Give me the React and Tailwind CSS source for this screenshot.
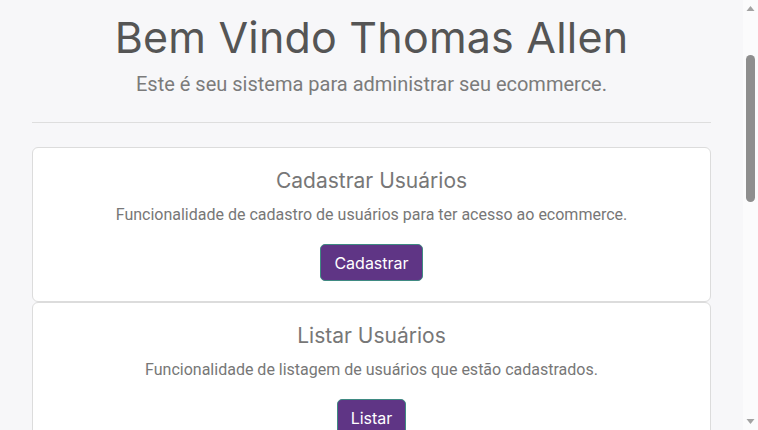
export default function App() {
  const cards = [
    {
      title: "Cadastrar Usuários",
      desc: "Funcionalidade de cadastro de usuários para ter acesso ao ecommerce.",
      btn: "Cadastrar",
    },
    {
      title: "Listar Usuários",
      desc: "Funcionalidade de listagem de usuários que estão cadastrados.",
      btn: "Listar",
    },
  ];
  return (
    <div className="flex h-[430px] overflow-hidden bg-[#f7f7f9] font-['Roboto',sans-serif]">
      <div className="flex-1 overflow-hidden px-8 pt-[11px]">
        <h1 className="text-center font-['Inter',sans-serif] text-[43px] leading-[53px] font-normal text-[#555555] tracking-[0.2px]">
          Bem Vindo Thomas Allen
        </h1>
        <p className="mt-[5px] text-center text-[20px] leading-[30px] text-[#7b7b7b]">
          Este é seu sistema para administrar seu ecommerce.
        </p>
        <hr className="mt-[23px] border-0 border-t border-[#dedede]" />
        <div className="mt-6 flex flex-col">
          {cards.map((c, i) => (
            <div
              key={i}
              className="flex flex-col items-center rounded-[6px] border border-[#dcdcdc] bg-white pt-[19px] pb-[20px]"
            >
              <h2 className="font-['Inter',sans-serif] text-[21px] leading-[28px] font-normal text-[#777777]">
                {c.title}
              </h2>
              <p className="mt-[8px] text-[16px] leading-[24px] text-[#777777]">
                {c.desc}
              </p>
              <button className="mt-[17px] flex h-[37px] items-center rounded-[5px] border border-[#3f8a82] bg-[#5f3585] px-[13px] font-['Inter',sans-serif] text-[16px] text-white">
                {c.btn}
              </button>
            </div>
          ))}
        </div>
      </div>
      <div className="flex w-[15px] shrink-0 flex-col items-center bg-[#fbfbfc]">
        <svg width="15" height="17" viewBox="0 0 15 17" className="shrink-0">
          <path d="M3.5 11 L7.5 6 L11.5 11 Z" fill="#a3a3a3" />
        </svg>
        <div className="mt-[38px] h-[147px] w-[9px] rounded-full bg-[#8e8e8e]" />
        <div className="flex-1" />
        <svg width="15" height="17" viewBox="0 0 15 17" className="shrink-0">
          <path d="M3.5 6 L7.5 11 L11.5 6 Z" fill="#a3a3a3" />
        </svg>
      </div>
    </div>
  );
}
